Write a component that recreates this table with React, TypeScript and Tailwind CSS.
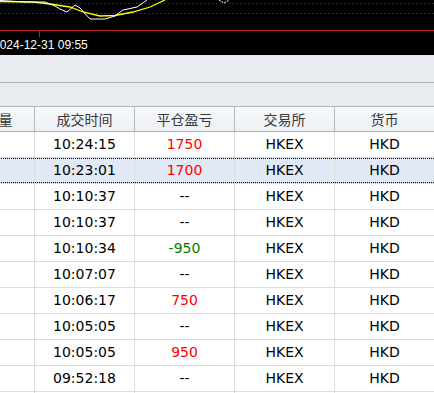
import React from "react";

type Row = { time: string; pnl: string; color?: "red" | "green" };

const rows: Row[] = [
  { time: "10:24:15", pnl: "1750", color: "red" },
  { time: "10:23:01", pnl: "1700", color: "red" },
  { time: "10:10:37", pnl: "--" },
  { time: "10:10:37", pnl: "--" },
  { time: "10:10:34", pnl: "-950", color: "green" },
  { time: "10:07:07", pnl: "--" },
  { time: "10:06:17", pnl: "750", color: "red" },
  { time: "10:05:05", pnl: "--" },
  { time: "10:05:05", pnl: "950", color: "red" },
  { time: "09:52:18", pnl: "--" },
];

function Chart() {
  return (
    <svg width="434" height="55" viewBox="0 0 434 55" className="block bg-black">
      <line x1="0" y1="3.5" x2="434" y2="3.5" stroke="#7a0a0a" strokeDasharray="2 2" />
      <line x1="0" y1="13.5" x2="434" y2="13.5" stroke="#7a0a0a" strokeDasharray="2 2" />
      <polyline
        fill="none"
        stroke="#ffff00"
        strokeWidth="1.3"
        points="0,1.5 33,2 50,4 70,7 83,12 100,16 115,15.5 133,12 150,7 165,0"
      />
      <polyline
        fill="none"
        stroke="#ffffff"
        strokeWidth="1"
        points="0,0.5 25,2 45,2 55,6 60,9 67,12 75,5 80,8 90,19 105,19 115,16 123,10 137,7 147,0"
      />
      <polyline fill="none" stroke="#ffffff" strokeWidth="1" strokeDasharray="2 1" points="219,0 224,3 229,0" />
      <line x1="0" y1="30.5" x2="434" y2="30.5" stroke="#b3221c" />
      <line x1="39.5" y1="31" x2="39.5" y2="37" stroke="#b3221c" />
      <text
        x="-7"
        y="49"
        fill="#ffffff"
        fontSize="12"
        fontFamily="'Liberation Sans', Arial, sans-serif"
      >
        2024-12-31 09:55
      </text>
    </svg>
  );
}

const cell = "w-[100px] shrink-0 flex items-center justify-center";

export default function App() {
  return (
    <div className="w-[434px] h-[393px] overflow-hidden bg-white">
      <Chart />
      <div className="h-[28px] bg-[#e8ebf0] border-b border-[#aeb3ba]" />
      <div className="h-[24px] bg-[#e8ebf0] border-b border-[#aeb3ba]" />
      <div className="ml-[-65px] flex flex-col">
        <div
          className="flex h-[25px] border-b border-[#a9aeb6] bg-gradient-to-b from-[#f6f8fb] to-[#edf0f4] text-[14px] text-[#383838]"
          style={{ fontFamily: "'Noto Sans CJK SC', 'Noto Sans', sans-serif" }}
        >
          {["成交数量", "成交时间", "平仓盈亏", "交易所", "货币"].map((h) => (
            <div key={h} className={`${cell} border-r border-[#b4b9c0] leading-none`}>
              {h}
            </div>
          ))}
        </div>
        <div
          className="flex flex-col text-[14px] text-black"
          style={{ fontFamily: "'DejaVu Sans', Tahoma, sans-serif" }}
        >
          {rows.map((r, i) => {
            const sel = i === 1;
            return (
              <div
                key={i}
                className={`relative flex h-[26px] border-b border-[#dcdcdc] ${sel ? "bg-[#e0e9f5]" : "bg-white"}`}
              >
                {sel && (
                  <div className="absolute inset-0 border-y border-dotted border-black pointer-events-none" />
                )}
                <div className={`${cell} border-r border-[#dcdcdc]`} />
                <div className={`${cell} border-r border-[#dcdcdc]`}>{r.time}</div>
                <div
                  className={`${cell} border-r border-[#dcdcdc] ${
                    r.color === "red" ? "text-[#ff0000]" : r.color === "green" ? "text-[#008000]" : "text-black"
                  }`}
                >
                  {r.pnl}
                </div>
                <div className={`${cell} border-r border-[#dcdcdc]`}>HKEX</div>
                <div className={`${cell} border-r border-[#dcdcdc]`}>HKD</div>
              </div>
            );
          })}
          <div className="flex h-[26px] border-b border-[#dcdcdc]">
            {[0, 1, 2, 3, 4].map((k) => (
              <div key={k} className={`${cell} border-r border-[#dcdcdc]`} />
            ))}
          </div>
        </div>
      </div>
    </div>
  );
}
